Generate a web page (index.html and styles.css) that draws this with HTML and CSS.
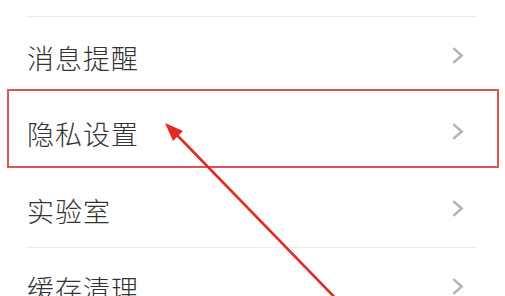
FILE: index.html
```html
<!DOCTYPE html>
<html lang="zh">
<head>
<meta charset="utf-8">
<link rel="stylesheet" href="styles.css">
</head>
<body>
<div class="page">
  <div class="top-space"></div>
  <div class="divider"></div>
  <div class="list">
    <div class="row"><span class="label">消息提醒</span><svg class="chev" viewBox="0 0 12 18"><path d="M2 2 L10 9 L2 16" /></svg></div>
    <div class="row"><span class="label">隐私设置</span><svg class="chev" viewBox="0 0 12 18"><path d="M2 2 L10 9 L2 16" /></svg></div>
    <div class="row"><span class="label">实验室</span><svg class="chev" viewBox="0 0 12 18"><path d="M2 2 L10 9 L2 16" /></svg></div>
  </div>
  <div class="divider"></div>
  <div class="row"><span class="label">缓存清理</span><svg class="chev" viewBox="0 0 12 18"><path d="M2 2 L10 9 L2 16" /></svg></div>
  <div class="highlight"></div>
  <svg class="arrow" viewBox="0 0 505 296" width="505" height="296">
    <line x1="176" y1="134" x2="345" y2="308" />
    <polygon points="165,123 183,131 173,141" />
  </svg>
</div>
</body>
</html>
```
FILE: styles.css
```css
html, body {
  margin: 0;
  padding: 0;
  background: #ffffff;
}
.page {
  position: relative;
  width: 505px;
  height: 296px;
  overflow: hidden;
  font-family: "Noto Sans CJK SC", "Noto Sans", sans-serif;
  color: #333333;
}
.top-space {
  height: 16px;
}
.divider {
  height: 1px;
  background: #ececec;
  margin: 0 28px 0 26px;
}
.row {
  display: flex;
  align-items: center;
  justify-content: space-between;
  height: 77px;
  padding: 0 41px 0 27px;
}
.list .row:first-child {
  height: 76px;
}
.label {
  font-size: 27px;
  font-weight: 300;
  line-height: 1;
  padding-top: 4px;
  letter-spacing: 1px;
}
.chev {
  width: 13px;
  height: 19px;
  fill: none;
  stroke: #b4b4b4;
  stroke-width: 2.4;
}
.highlight {
  position: absolute;
  left: 7px;
  top: 89px;
  width: 488px;
  height: 75px;
  border: 2px solid #dc5550;
}
.arrow {
  position: absolute;
  left: 0;
  top: 0;
}
.arrow line {
  stroke: #e32b22;
  stroke-width: 2.6;
}
.arrow polygon {
  fill: #e32b22;
}
```
